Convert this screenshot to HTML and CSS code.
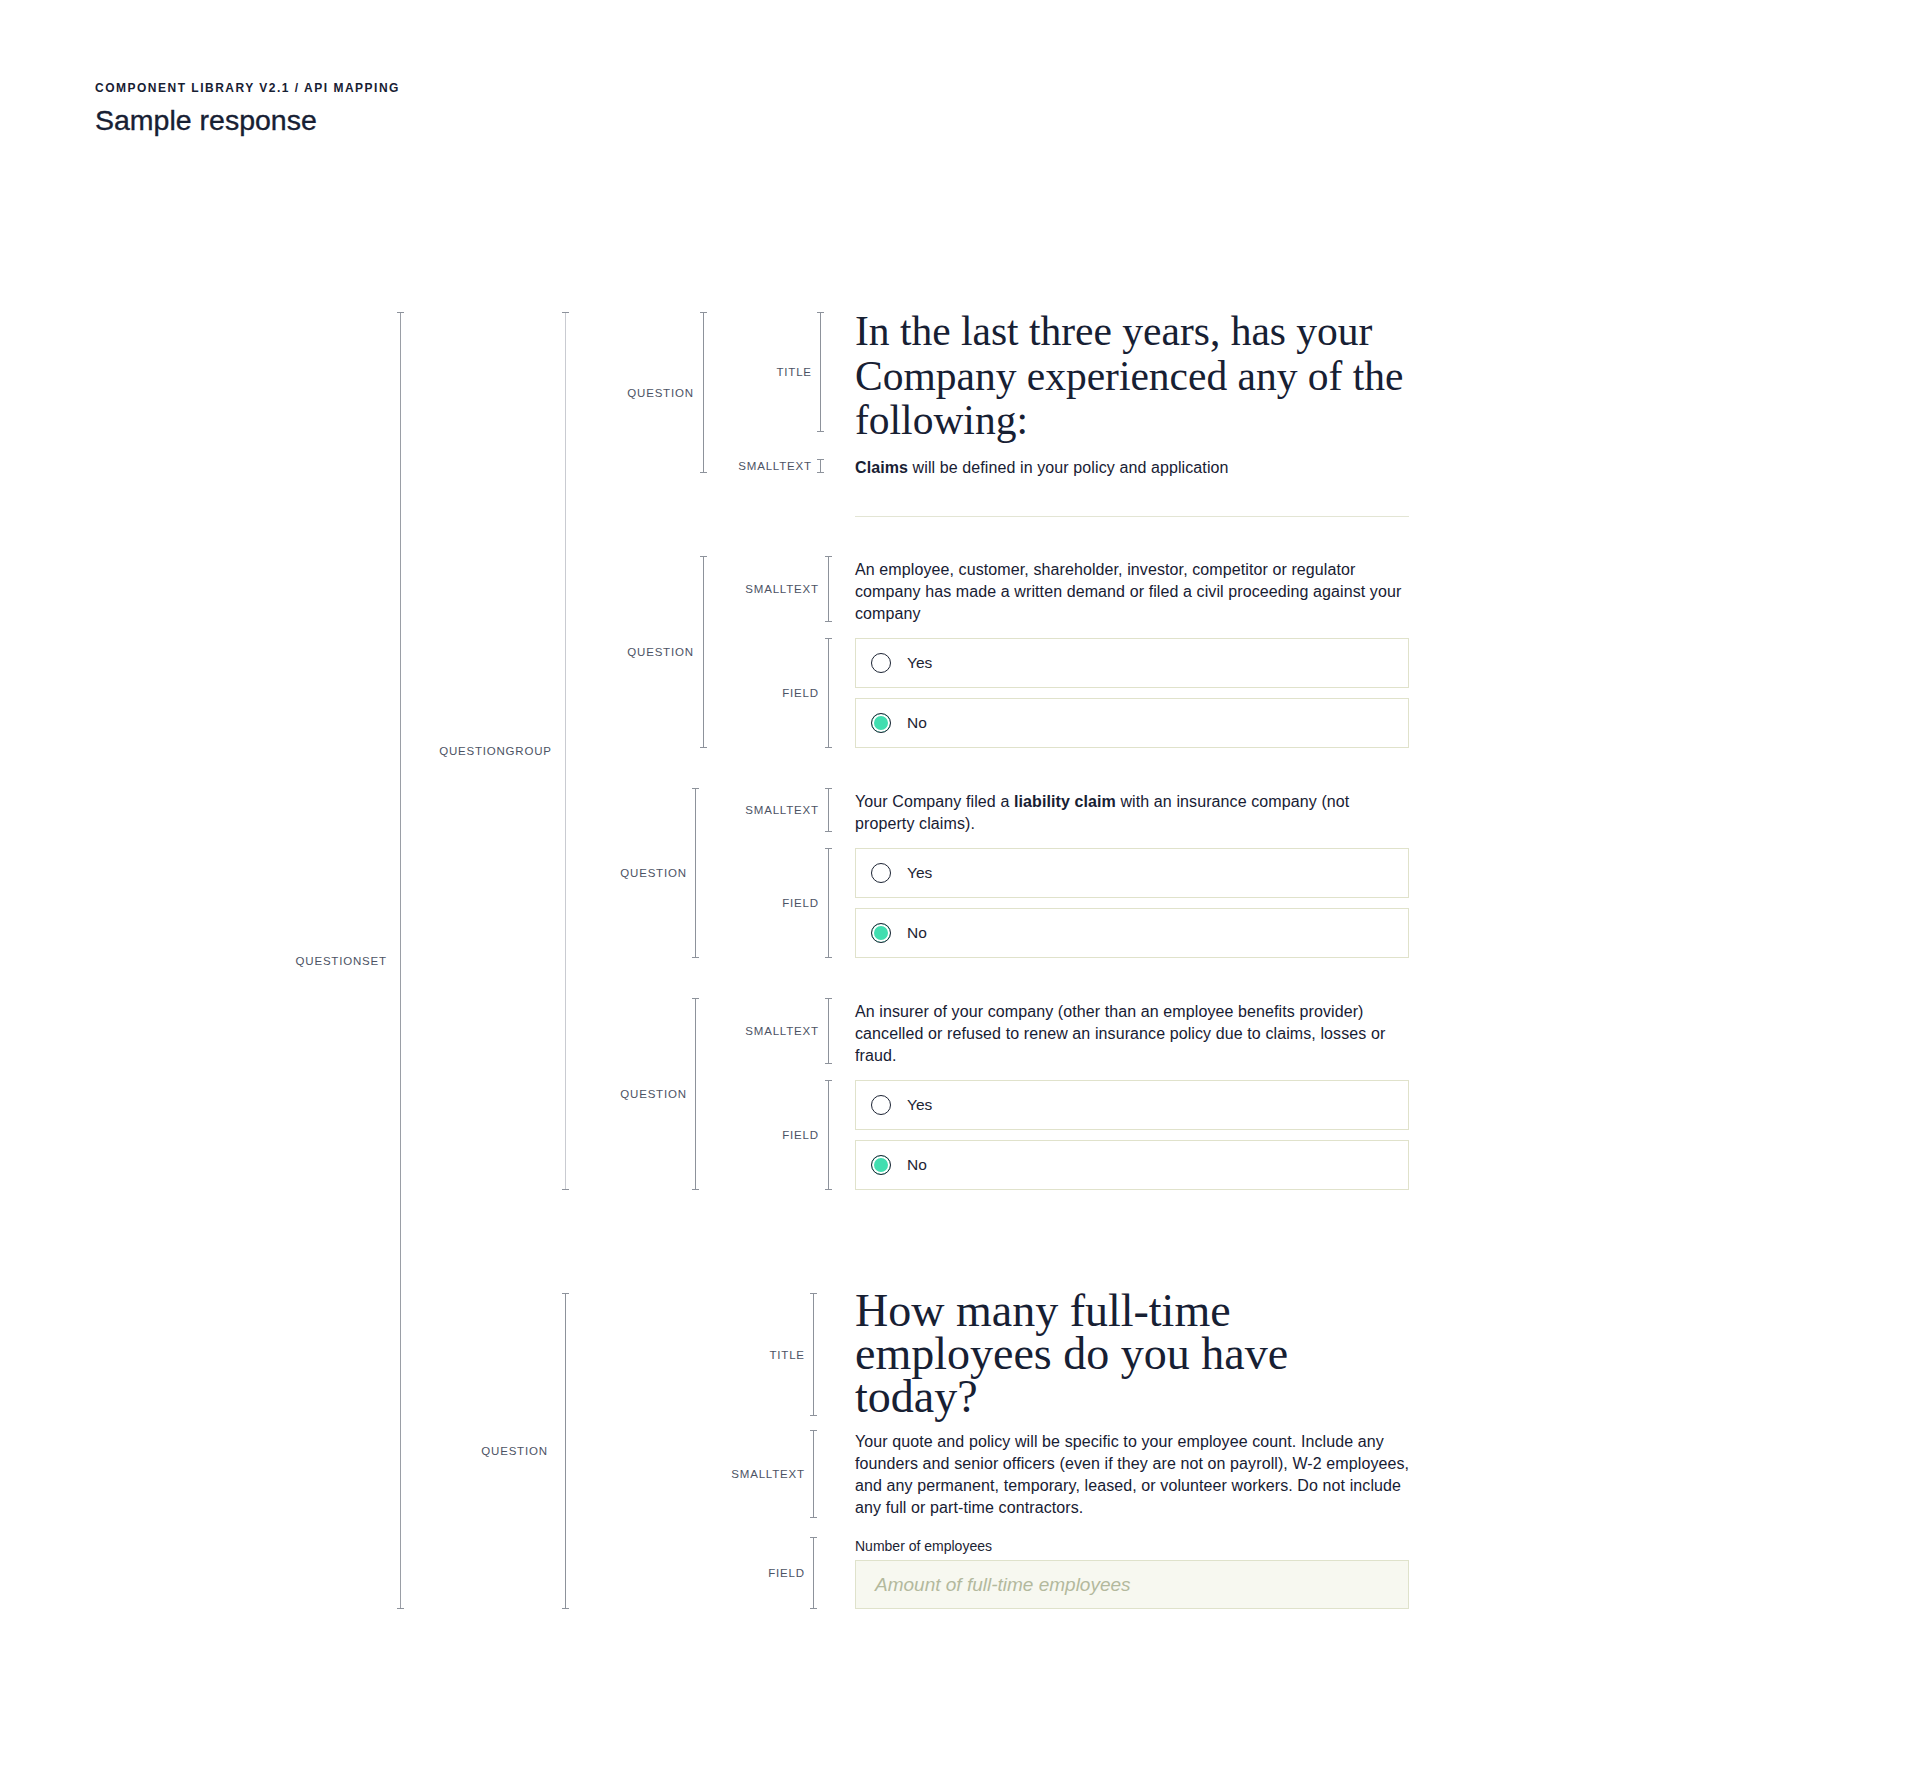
FILE: index.html
```html
<!DOCTYPE html>
<html lang="en">
<head>
<meta charset="utf-8">
<title>Sample response</title>
<link rel="stylesheet" href="styles.css">
</head>
<body>
<header class="header">
  <p class="eyebrow">COMPONENT LIBRARY V2.1 / API MAPPING</p>
  <h1 class="page-title">Sample response</h1>
</header>

<main class="diagram">
  <div class="node n-set">
    <div class="lbl"><span>QUESTIONSET</span></div>
    <div class="br br-mid"></div>
    <div class="body set-body">

      <div class="node n-group">
        <div class="lbl"><span>QUESTIONGROUP</span></div>
        <div class="br br-light"></div>
        <div class="body">

          <!-- Question 1 -->
          <div class="node n-q">
            <div class="lbl"><span>QUESTION</span></div>
            <div class="br"></div>
            <div class="body">
              <div class="node n-part p-a">
                <div class="lbl"><span>TITLE</span></div>
                <div class="br"></div>
                <div class="content"><h2 class="title title-a">In the last three years, has your Company experienced any of the following:</h2></div>
              </div>
              <div class="node n-part p-a gap-27">
                <div class="lbl"><span>SMALLTEXT</span></div>
                <div class="br"></div>
                <div class="content"><p class="small small-tight"><strong>Claims</strong> will be defined in your policy and application</p></div>
              </div>
            </div>
          </div>

          <div class="divider"></div>

          <!-- Question 2 -->
          <div class="node n-q">
            <div class="lbl"><span>QUESTION</span></div>
            <div class="br"></div>
            <div class="body">
              <div class="node n-part p-b">
                <div class="lbl"><span>SMALLTEXT</span></div>
                <div class="br"></div>
                <div class="content"><p class="small">An employee, customer, shareholder, investor, competitor or regulator<br>company has made a written demand or filed a civil proceeding against your<br>company</p></div>
              </div>
              <div class="node n-part p-b gap-16">
                <div class="lbl"><span>FIELD</span></div>
                <div class="br"></div>
                <div class="content options">
                  <div class="option"><span class="radio"></span><span class="opt-text">Yes</span></div>
                  <div class="option"><span class="radio radio-on"></span><span class="opt-text">No</span></div>
                </div>
              </div>
            </div>
          </div>

          <!-- Question 3 -->
          <div class="node n-q n-q-narrow gap-40">
            <div class="lbl"><span>QUESTION</span></div>
            <div class="br"></div>
            <div class="body">
              <div class="node n-part p-c">
                <div class="lbl"><span>SMALLTEXT</span></div>
                <div class="br"></div>
                <div class="content"><p class="small">Your Company filed a <strong>liability claim</strong> with an insurance company (not<br>property claims).</p></div>
              </div>
              <div class="node n-part p-c gap-16">
                <div class="lbl"><span>FIELD</span></div>
                <div class="br"></div>
                <div class="content options">
                  <div class="option"><span class="radio"></span><span class="opt-text">Yes</span></div>
                  <div class="option"><span class="radio radio-on"></span><span class="opt-text">No</span></div>
                </div>
              </div>
            </div>
          </div>

          <!-- Question 4 -->
          <div class="node n-q n-q-narrow gap-40">
            <div class="lbl"><span>QUESTION</span></div>
            <div class="br"></div>
            <div class="body">
              <div class="node n-part p-c">
                <div class="lbl"><span>SMALLTEXT</span></div>
                <div class="br"></div>
                <div class="content"><p class="small">An insurer of your company (other than an employee benefits provider)<br>cancelled or refused to renew an insurance policy due to claims, losses or<br>fraud.</p></div>
              </div>
              <div class="node n-part p-c gap-16">
                <div class="lbl"><span>FIELD</span></div>
                <div class="br"></div>
                <div class="content options">
                  <div class="option"><span class="radio"></span><span class="opt-text">Yes</span></div>
                  <div class="option"><span class="radio radio-on"></span><span class="opt-text">No</span></div>
                </div>
              </div>
            </div>
          </div>

        </div>
      </div>

      <!-- Standalone question -->
      <div class="node n-group n-solo">
        <div class="lbl"><span>QUESTION</span></div>
        <div class="br"></div>
        <div class="body">
          <div class="node n-part p-d">
            <div class="lbl"><span>TITLE</span></div>
            <div class="br"></div>
            <div class="content"><h2 class="title title-b">How many full-time employees do you have today?</h2></div>
          </div>
          <div class="node n-part p-d gap-14">
            <div class="lbl"><span>SMALLTEXT</span></div>
            <div class="br"></div>
            <div class="content"><p class="small small-b">Your quote and policy will be specific to your employee count. Include any<br>founders and senior officers (even if they are not on payroll), W-2 employees,<br>and any permanent, temporary, leased, or volunteer workers. Do not include<br>any full or part-time contractors.</p></div>
          </div>
          <div class="node n-part p-d gap-19">
            <div class="lbl"><span>FIELD</span></div>
            <div class="br"></div>
            <div class="content">
              <div class="field-label">Number of employees</div>
              <div class="text-input"><span class="placeholder">Amount of full-time employees</span></div>
            </div>
          </div>
        </div>
      </div>

    </div>
  </div>
</main>
</body>
</html>
```

FILE: styles.css
```css
* { box-sizing: border-box; }

body {
  margin: 0;
  background: #ffffff;
  font-family: "Liberation Sans", Arial, sans-serif;
  color: #172033;
}

/* Header */
.header {
  padding: 80px 0 0 95px;
}
.eyebrow {
  margin: 0;
  font-size: 12px;
  line-height: 16px;
  font-weight: 700;
  letter-spacing: 1.5px;
  color: #172033;
}
.page-title {
  margin: 7px 0 0;
  font-size: 28.5px;
  line-height: 34px;
  font-weight: 400;
  color: #172033;
  -webkit-text-stroke: 0.35px #172033;
}

/* Diagram */
.diagram {
  margin-top: 175px;
  padding-left: 200px;
  padding-bottom: 182px;
}

.node {
  display: flex;
  align-items: stretch;
}

.lbl {
  flex: none;
  width: var(--lw);
  display: flex;
  align-items: center;
  justify-content: flex-end;
}
.lbl span {
  font-size: 11.5px;
  line-height: 14px;
  letter-spacing: 0.8px;
  margin-right: -0.8px;
  color: #4c5364;
  white-space: nowrap;
}

.br {
  flex: none;
  width: 7px;
  margin-left: var(--bg);
  border-top: 1px solid #8d929b;
  border-bottom: 1px solid #8d929b;
  background: linear-gradient(#8d929b, #8d929b) center / 1px 100% no-repeat;
}
.br-mid {
  background-image: linear-gradient(#9a9ea6, #9a9ea6);
}
.br-light {
  background-image: linear-gradient(#c9cbd1, #c9cbd1);
}

.body {
  display: flex;
  flex-direction: column;
}

/* Level widths */
.n-set   { --lw: 186px; --bg: 11px; }
.n-group { --lw: 147px; --bg: 11px; }
.n-solo  { --lw: 143px; --bg: 15px; }
.n-q     { --lw: 124px; --bg: 7px; }
.n-q-narrow { --lw: 117px; --bg: 6px; }

.p-a { --lw: 104px; --bg: 6px; --cm: 31px; }
.p-b { --lw: 111px; --bg: 7px; --cm: 23px; }
.p-c { --lw: 119px; --bg: 7px; --cm: 23px; }
.p-d { --lw: 235px; --bg: 6px; --cm: 38px; }

.set-body > .n-solo { margin-top: 103px; }

.gap-14 { margin-top: 14px; }
.gap-16 { margin-top: 16px; }
.gap-19 { margin-top: 19px; }
.gap-27 { margin-top: 27px; }
.gap-40 { margin-top: 40px; }

.content {
  width: 554px;
  margin-left: var(--cm);
}

.divider {
  width: 554px;
  height: 1px;
  margin: 43px 0 39px 286px;
  background: #e3e5d4;
}

/* Titles */
.title {
  font-family: "Liberation Serif", "Times New Roman", serif;
  font-weight: 400;
  color: #172033;
}
.title-a {
  font-size: 41.5px;
  line-height: 44.5px;
  margin: -3px 0 -10.5px;
}
.title-b {
  font-size: 46px;
  line-height: 43px;
  margin: -4px 0 -2px;
}

/* Small text */
.small {
  margin: 0 0 -2.5px;
  padding-top: 2.5px;
  font-size: 16px;
  line-height: 22px;
  letter-spacing: 0.1px;
  white-space: nowrap;
  color: #172033;
}
.small strong { font-weight: 700; }
.small-tight { margin: -5px 0 -5.5px; }
.small-b { margin-bottom: -1px; padding-top: 1px; }

/* Radio options */
.options {
  display: flex;
  flex-direction: column;
  gap: 10px;
}
.option {
  height: 50px;
  border: 1px solid #e0e2cb;
  display: flex;
  align-items: center;
  padding-left: 15px;
}
.radio {
  flex: none;
  width: 20px;
  height: 20px;
  border: 1.5px solid #1c2434;
  border-radius: 50%;
  background: #ffffff;
}
.radio-on {
  background: #41deb0;
  box-shadow: inset 0 0 0 2px #ffffff;
}
.opt-text {
  margin-left: 16px;
  font-size: 15.5px;
  color: #1c2434;
}

/* Text input */
.field-label {
  font-size: 14px;
  line-height: 18px;
  color: #1c2434;
  margin-bottom: 5px;
}
.text-input {
  height: 49px;
  border: 1px solid #dfe2cb;
  background: #f7f8f0;
  display: flex;
  align-items: center;
  padding-left: 19px;
}
.placeholder {
  font-style: italic;
  font-size: 19px;
  color: #b3b99d;
}
```
